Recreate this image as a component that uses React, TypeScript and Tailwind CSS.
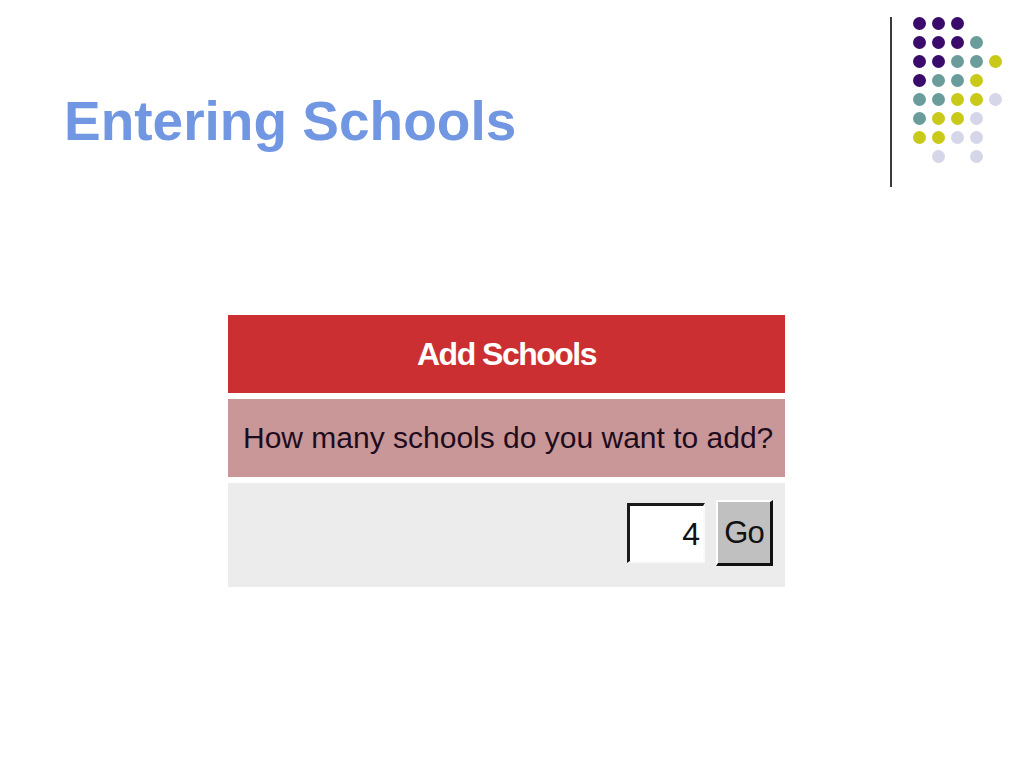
import React from "react";

const P = "bg-[#3b0b6b]";
const T = "bg-[#6b9c9c]";
const Y = "bg-[#c9c919]";
const L = "bg-[#d6d6e9]";

// 5 columns x 8 rows, "" = empty slot
const dots: string[][] = [
  [P, P, P, "", ""],
  [P, P, P, T, ""],
  [P, P, T, T, Y],
  [P, T, T, Y, ""],
  [T, T, Y, Y, L],
  [T, Y, Y, L, ""],
  [Y, Y, L, L, ""],
  ["", L, "", L, ""],
];

const App = () => {
  return (
    <div className="w-[1024px] h-[768px] bg-white font-['Liberation_Sans',Arial,sans-serif] flex flex-col">
      <div className="flex pt-[17px] h-[187px]">
        <div className="w-[890px] pl-[64px]">
          <h1 className="mt-[77px] text-[55px] leading-none font-bold text-[#7196e2]">Entering Schools</h1>
        </div>
        <div className="w-[2px] h-[170px] bg-[#3a3a3a]" />
        <div className="ml-[21px] grid grid-cols-5 gap-[6px] h-fit">
          {dots.flat().map((c, i) => (
            <div key={i} className={`w-[13px] h-[13px] rounded-full ${c}`} />
          ))}
        </div>
      </div>

      <div className="ml-[228px] mt-[128px] w-[557px] flex flex-col gap-[6px]">
        <div className="h-[78px] bg-[#cb2f31] flex items-center justify-center">
          <span className="text-white font-bold text-[32px] leading-none tracking-[-1.5px]">Add Schools</span>
        </div>
        <div className="h-[78px] bg-[#c99797] flex items-center pl-[15px]">
          <span className="text-[#1e0c1e] text-[30px] leading-none">How many schools do you want to add?</span>
        </div>
        <div className="h-[104px] bg-[#ececec] flex items-center justify-end pr-[12px] gap-[11px] pb-[4px]">
          <div className="w-[78px] h-[60px] bg-white border-t-[3px] border-l-[3px] border-b-[2px] border-r-[2px] border-t-[#1a1a1a] border-l-[#1a1a1a] border-b-[#fafafa] border-r-[#fafafa] flex items-center justify-end pr-[3px]">
            <span className="text-[32px] leading-none text-[#111]">4</span>
          </div>
          <div className="w-[57px] h-[66px] bg-[#c0c0c0] border-t-[2px] border-l-[2px] border-b-[3px] border-r-[3px] border-t-white border-l-white border-b-[#111] border-r-[#111] flex items-center justify-center">
            <span className="text-[31px] leading-none text-[#111] tracking-[-1px]">Go</span>
          </div>
        </div>
      </div>
    </div>
  );
};

export default App;
